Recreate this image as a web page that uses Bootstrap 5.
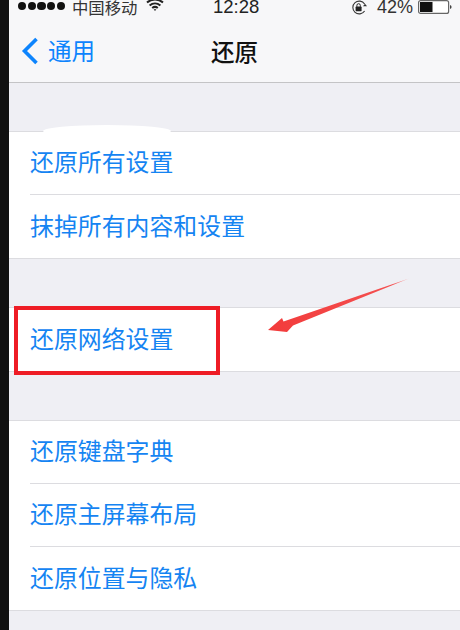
<!DOCTYPE html>
<html lang="zh">
<head>
<meta charset="utf-8">
<title>还原</title>
<link rel="stylesheet" href="https://cdn.jsdelivr.net/npm/bootstrap@5.3.0/dist/css/bootstrap.min.css">
<style>
html,body{margin:0;height:630px;overflow:hidden;background:#efeff4;font-family:"Noto Sans CJK SC","Liberation Sans",sans-serif}
.strip{width:9px;background:#111;flex:none}
.screen{position:relative;height:630px;background:#efeff4;min-width:0}
.topbar{height:83px;background:#f7f7f9;border-bottom:1px solid #c4c4c6;color:#1c1c1c}
.status{height:14px;font-size:18px;line-height:1;padding:0 8px 0 9px;font-family:"Liberation Sans","Noto Sans CJK SC",sans-serif;color:#222;margin-bottom:14px}
.dots{gap:1.5px;margin-bottom:2px}
.dots i{display:block;width:8.2px;height:8.2px;border-radius:50%;background:#111}
.carrier{font-size:16.4px;line-height:14px;color:#333;margin-left:7px;font-family:"Noto Sans CJK SC",sans-serif}
.clock{position:absolute;left:204px;top:0;font-size:18.5px;line-height:14px}
.pct{font-size:18px;line-height:14px;color:#333;margin:0 5px 0 9px}
.navline{height:49px;position:relative}
.back{color:#0d84fd;font-size:23.5px;gap:9px;padding-left:12px;line-height:1}
.navtitle{position:absolute;left:0;right:0;top:0;height:49px;font-size:23.5px;font-weight:500;text-align:center;line-height:46px;color:#111}
.grp{background:#fff;border-top:1px solid #dcdce0;border-bottom:1px solid #dcdce0;margin-top:48px}
.cell{height:63px;margin-left:21px;display:flex;align-items:center;color:#1584f2;font-size:23.9px;line-height:1;border-bottom:1px solid #dcdce0;padding-bottom:4px}
.cell:last-child{border-bottom:0}
.redbox{position:absolute;left:5px;top:306px;width:206px;height:69px;border:4px solid #ee1c25}
.arrow{position:absolute;left:255px;top:275px}
.blot{position:absolute;left:34px;top:125px;width:128px;height:12px;border-radius:50%;background:#fff}
</style>
</head>
<body>
<div class="d-flex">
  <div class="strip"></div>
  <div class="screen flex-grow-1">
    <div class="topbar">
      <div class="status d-flex align-items-center position-relative">
        <div class="dots d-flex"><i></i><i></i><i></i><i></i><i></i></div>
        <span class="carrier">中国移动</span>
        <svg class="ms-2 mb-1" width="18" height="14" viewBox="0 0 18 14"><path d="M1 4.6C5.6.6 12.4.6 17 4.6M3.6 7.4C6.8 4.7 11.2 4.7 14.4 7.4M6.2 10C7.8 8.7 10.2 8.7 11.8 10" fill="none" stroke="#222" stroke-width="2"/><path d="M7.6 11.2 9 13l1.4-1.8z" fill="#222"/></svg>
        <span class="clock">12:28</span>
        <div class="ms-auto d-flex align-items-center">
          <svg width="17" height="15" viewBox="0 0 17 15"><path d="M13.6 4A6.4 6.4 0 1 0 13.6 11" fill="none" stroke="#333" stroke-width="1.1"/><path d="M12 6.2h4l-2-2.4z" fill="#333"/><rect x="4.6" y="6.6" width="6" height="4.6" rx=".6" fill="#222"/><path d="M5.9 6.8V5.4a1.7 1.7 0 0 1 3.4 0v1.4" fill="none" stroke="#222" stroke-width="1"/></svg>
          <span class="pct">42%</span>
          <svg width="34" height="14" viewBox="0 0 34 14"><rect x=".6" y=".6" width="30" height="12.8" rx="2" fill="#fff" stroke="#666" stroke-width="1.2"/><rect x="2" y="2" width="12.5" height="10" fill="#111"/><path d="M32 5v4a2 2 0 0 0 1.6-2A2 2 0 0 0 32 5z" fill="#444"/></svg>
        </div>
      </div>
      <div class="navline">
        <div class="back d-flex align-items-center h-100 pb-1">
          <svg width="18" height="28" viewBox="0 0 18 28"><path d="M15.5 2 3.5 14l12 12" fill="none" stroke="#0d84fd" stroke-width="3.6"/></svg>
          <span>通用</span>
        </div>
        <div class="navtitle">还原</div>
      </div>
    </div>
    <div class="grp">
      <div class="cell">还原所有设置</div>
      <div class="cell">抹掉所有内容和设置</div>
    </div>
    <div class="grp">
      <div class="cell">还原网络设置</div>
    </div>
    <div class="grp">
      <div class="cell">还原键盘字典</div>
      <div class="cell">还原主屏幕布局</div>
      <div class="cell">还原位置与隐私</div>
    </div>
    <div class="blot"></div>
    <div class="redbox"></div>
    <svg class="arrow" width="150" height="62" viewBox="0 0 150 62"><defs><linearGradient id="ag" x1="1" y1="0" x2="0" y2="0"><stop offset="0" stop-color="#f9b0b0"/><stop offset=".12" stop-color="#f45050"/><stop offset="1" stop-color="#f23b3b"/></linearGradient></defs><path d="M145 3.5 29 50.5 23 57 4 55 18 43 19.5 46.5z" fill="url(#ag)"/></svg>
  </div>
</div>
<script src="https://cdn.jsdelivr.net/npm/bootstrap@5.3.0/dist/js/bootstrap.bundle.min.js"></script>
</body>
</html>
